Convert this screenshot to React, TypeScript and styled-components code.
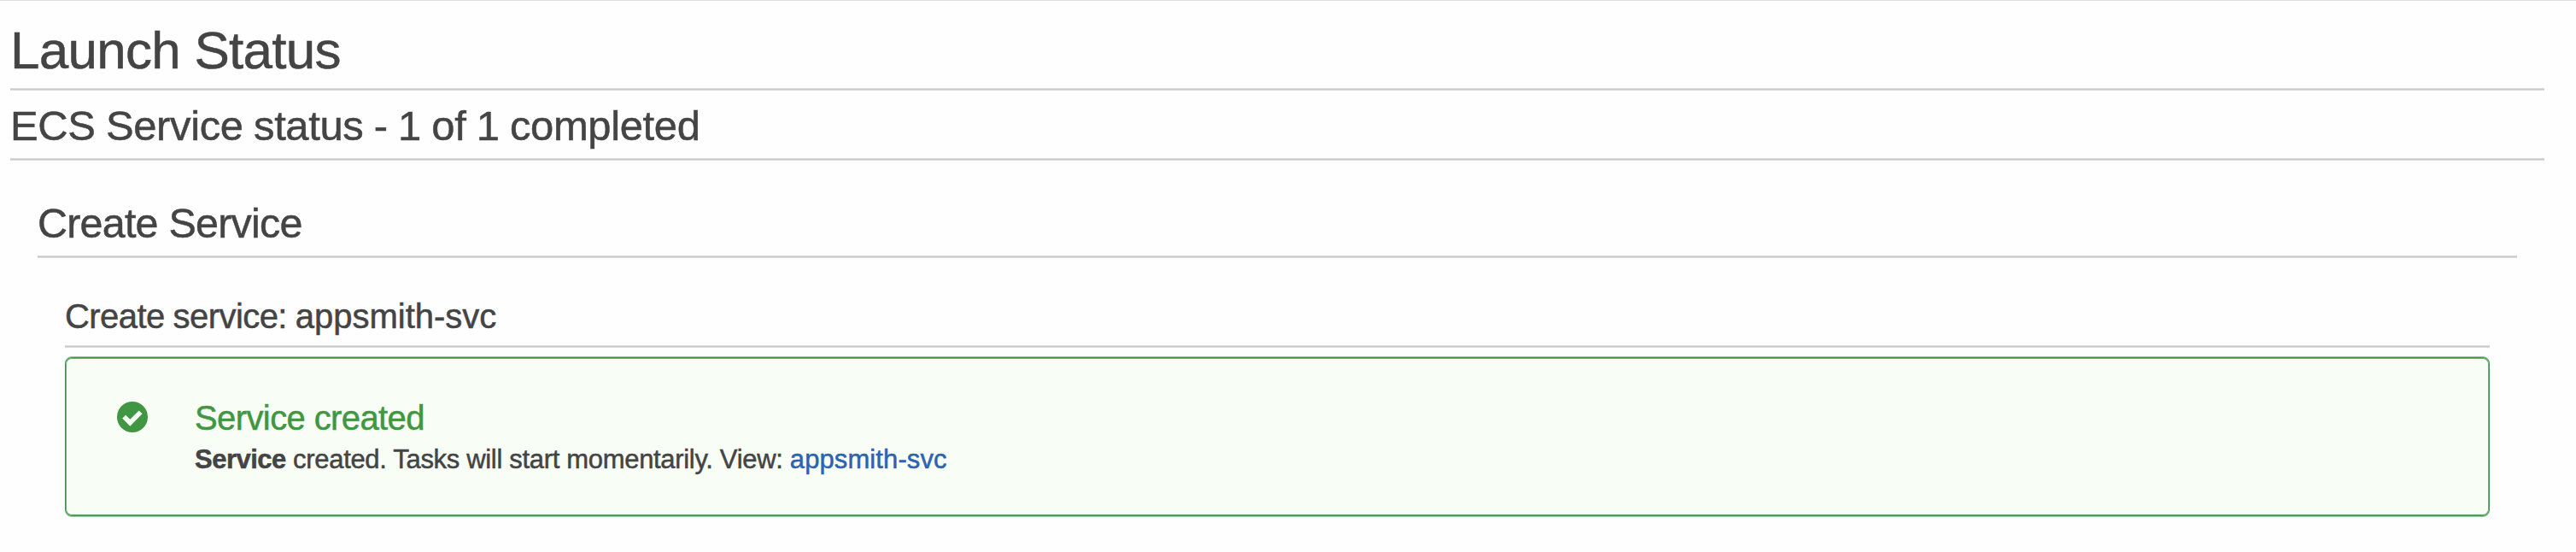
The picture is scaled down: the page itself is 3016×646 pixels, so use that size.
import React from "react";
import styled, { createGlobalStyle } from "styled-components";

const GlobalStyle = createGlobalStyle`
  * { box-sizing: border-box; }
  body { margin: 0; background: #fefefe; }
`;

const Page = styled.main`
  height: 646px;
  padding: 28px 37px 0 12px;
  border-top: 1px solid #dcdcdc;
  color: #444;
  font-family: "Liberation Sans", Helvetica, Arial, sans-serif;
  -webkit-text-stroke: 0.5px currentColor;
`;

const Heading = styled.h2<{ $size: number; $height: number; $spacing: number; $top?: number; $word?: number }>`
  height: ${(p) => p.$height}px;
  margin: 0;
  padding-top: ${(p) => p.$top ?? 0}px;
  font-size: ${(p) => p.$size}px;
  line-height: 60px;
  letter-spacing: ${(p) => p.$spacing}px;
  word-spacing: ${(p) => p.$word ?? 0}px;
  font-weight: 400;
  white-space: nowrap;
  border-bottom: 1px solid #c8c8c8;
  box-shadow: 0 1px 0 #dcdcdc, inset 0 -1px 0 #dcdcdc;
`;

const ServiceName = styled.span`
  letter-spacing: 0;
`;

const Section = styled.section<{ $top: number }>`
  padding: ${(p) => p.$top}px 32px 0;
`;

const Alert = styled.div`
  display: flex;
  height: 186px;
  margin-top: 12px;
  padding: 45px 58px 0 60px;
  border: 1px solid #43914f;
  border-radius: 8px;
  background: #f8fef6;
  box-shadow: 0 -1px 0 #93c99c, 0 1px 0 #93c99c, inset 0 0 0 1px #6aae75;
`;

const CheckIcon = styled.svg`
  flex: none;
  width: 36px;
  height: 36px;
  margin: 6px 55px 0 0;
`;

const AlertTitle = styled.div`
  color: #419641;
  font-size: 40px;
  line-height: 50px;
  letter-spacing: -0.6px;
`;

const AlertText = styled.div`
  font-size: 31px;
  line-height: 48px;
  letter-spacing: -0.32px;
  white-space: nowrap;
`;

const Strong = styled.b`
  letter-spacing: -0.5px;
`;

const Link = styled.a`
  color: #2c63b0;
  letter-spacing: 0.1px;
  text-decoration: none;
`;

export default function App() {
  return (
    <>
      <GlobalStyle />
      <Page>
        <Heading as="h1" $size={62} $height={76} $spacing={-0.75}>Launch Status</Heading>
        <Heading $size={49} $height={82} $spacing={-0.38} $word={-0.9} $top={12}>ECS Service status - 1 of 1 completed</Heading>
        <Section $top={44}>
          <Heading as="h3" $size={48.5} $height={70} $spacing={-0.8}>Create Service</Heading>
          <Section $top={39}>
            <Heading as="h4" $size={40} $height={66} $spacing={-0.55} $word={-0.8}>
              Create service: <ServiceName>appsmith-svc</ServiceName>
            </Heading>
            <Alert>
              <CheckIcon viewBox="0 0 36 36">
                <circle cx="18" cy="18" r="18" fill="#419641" />
                <path d="M8.2 17.6 L15.3 24.8 L27.6 12.4" fill="none" stroke="#f8fef6" strokeWidth="5.5" />
              </CheckIcon>
              <div>
                <AlertTitle>Service created</AlertTitle>
                <AlertText>
                  <Strong>Service</Strong> created. Tasks will start momentarily. View: <Link>appsmith-svc</Link>
                </AlertText>
              </div>
            </Alert>
          </Section>
        </Section>
      </Page>
    </>
  );
}
